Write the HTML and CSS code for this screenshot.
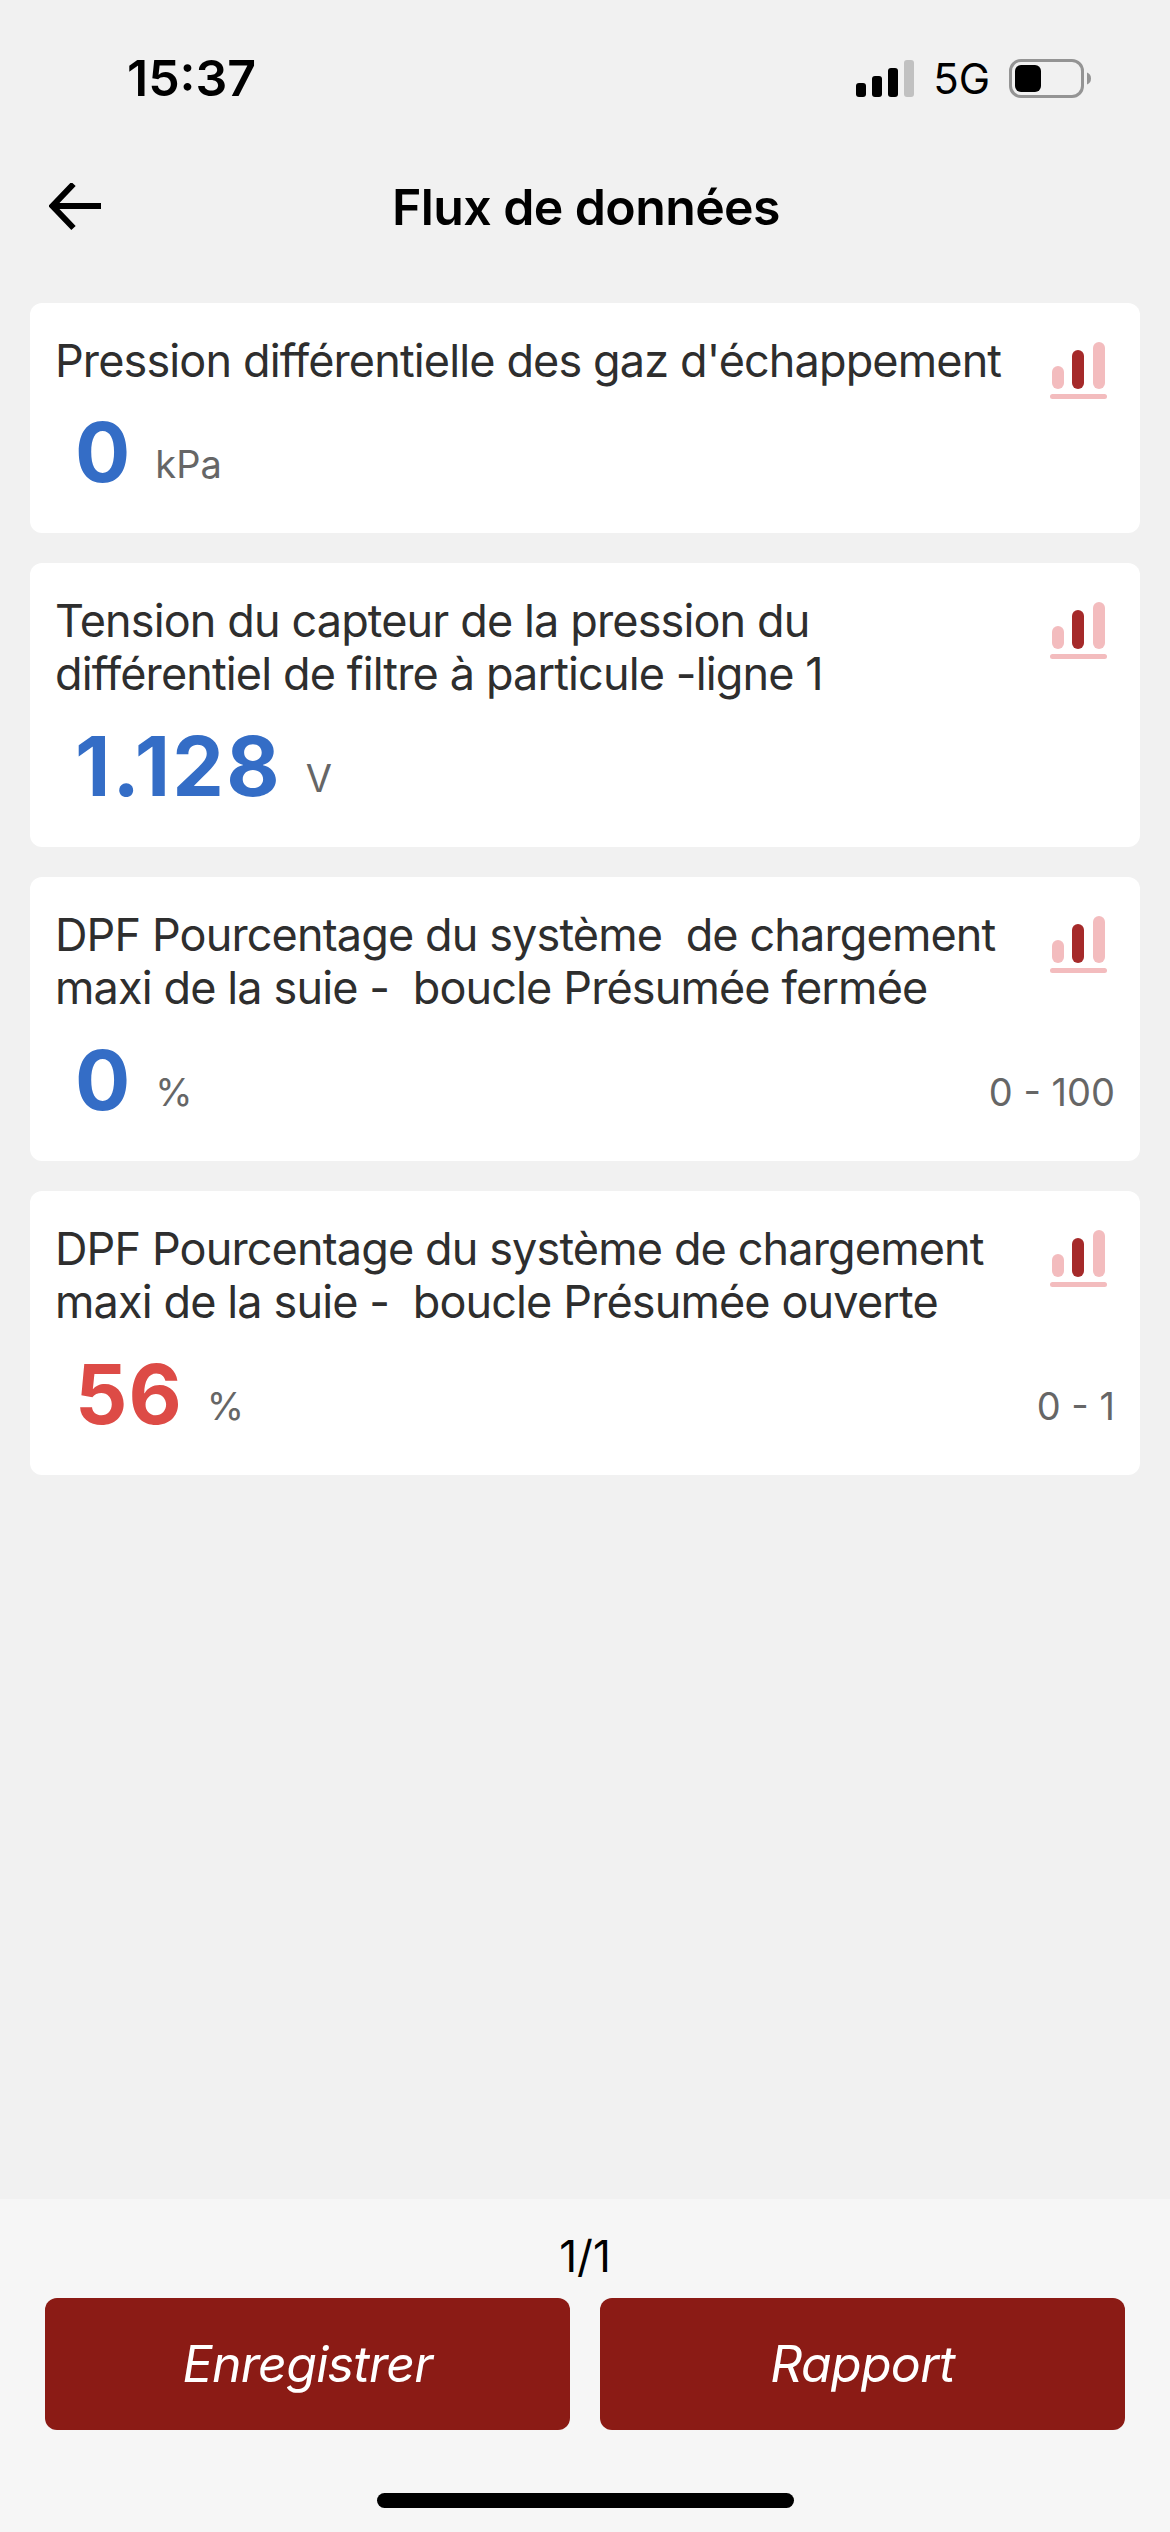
FILE: index.html
```html
<!DOCTYPE html>
<html lang="fr">
<head>
    <meta charset="UTF-8">
    <meta name="viewport" content="width=device-width, initial-scale=1.0">
    <title>Flux de données</title>
    <link rel="stylesheet" href="styles.css">
</head>
<body>
    <div class="status-bar">
        <span class="time">15:37</span>
        <div class="status-icons">
            <svg class="signal" width="58" height="37" viewBox="0 0 58 37">
                <rect x="0" y="23" width="10" height="14" rx="3"/>
                <rect x="16" y="16" width="10" height="21" rx="3"/>
                <rect x="32" y="8" width="10" height="29" rx="3"/>
                <rect x="48" y="0" width="10" height="37" rx="3" fill="#c1c1c1"/>
            </svg>
            <span class="network">5G</span>
            <svg class="battery" width="82" height="39" viewBox="0 0 82 39">
                <rect x="1.5" y="1.5" width="72" height="36" rx="10.5" fill="none" stroke="#949494" stroke-width="3"/>
                <rect x="6" y="6" width="26" height="27" rx="6"/>
                <path d="M78 13.500q4 1.500 4 6t-4 6z" fill="#949494"/>
            </svg>
        </div>
    </div>

    <header class="header">
        <svg class="back" width="52" height="48" viewBox="0 0 52 48">
            <path d="M4 23H52M24.500 1L3.500 23L24.500 45" fill="none" stroke="#000" stroke-width="6"/>
        </svg>
        <h1>Flux de données</h1>
    </header>

    <main class="list">
        <div class="card">
            <div class="card-top">
                <p class="label">Pression différentielle des gaz d'échappement</p>
                <svg class="chart" width="57" height="57" viewBox="0 0 57 57">
                    <rect x="2" y="24" width="12" height="23" rx="6"/>
                    <rect x="22" y="8" width="12" height="39" rx="6" fill="#a52a2a"/>
                    <rect x="43" y="0" width="12" height="47" rx="6"/>
                    <rect x="0" y="52" width="57" height="5" rx="2.500"/>
                </svg>
            </div>
            <div class="reading">
                <span class="value">0</span>
                <span class="unit">kPa</span>
            </div>
        </div>

        <div class="card">
            <div class="card-top">
                <p class="label">Tension du capteur de la pression du
différentiel de filtre à particule -ligne 1</p>
                <svg class="chart" width="57" height="57" viewBox="0 0 57 57">
                    <rect x="2" y="24" width="12" height="23" rx="6"/>
                    <rect x="22" y="8" width="12" height="39" rx="6" fill="#a52a2a"/>
                    <rect x="43" y="0" width="12" height="47" rx="6"/>
                    <rect x="0" y="52" width="57" height="5" rx="2.500"/>
                </svg>
            </div>
            <div class="reading">
                <span class="value decimal">1.128</span>
                <span class="unit">V</span>
            </div>
        </div>

        <div class="card">
            <div class="card-top">
                <p class="label">DPF Pourcentage du système  de chargement
maxi de la suie -  boucle Présumée fermée</p>
                <svg class="chart" width="57" height="57" viewBox="0 0 57 57">
                    <rect x="2" y="24" width="12" height="23" rx="6"/>
                    <rect x="22" y="8" width="12" height="39" rx="6" fill="#a52a2a"/>
                    <rect x="43" y="0" width="12" height="47" rx="6"/>
                    <rect x="0" y="52" width="57" height="5" rx="2.500"/>
                </svg>
            </div>
            <div class="reading">
                <span class="value">0</span>
                <span class="unit">%</span>
                <span class="range">0 - 100</span>
            </div>
        </div>

        <div class="card">
            <div class="card-top">
                <p class="label">DPF Pourcentage du système de chargement
maxi de la suie -  boucle Présumée ouverte</p>
                <svg class="chart" width="57" height="57" viewBox="0 0 57 57">
                    <rect x="2" y="24" width="12" height="23" rx="6"/>
                    <rect x="22" y="8" width="12" height="39" rx="6" fill="#a52a2a"/>
                    <rect x="43" y="0" width="12" height="47" rx="6"/>
                    <rect x="0" y="52" width="57" height="5" rx="2.500"/>
                </svg>
            </div>
            <div class="reading">
                <span class="value alert">56</span>
                <span class="unit">%</span>
                <span class="range">0 - 1</span>
            </div>
        </div>
    </main>

    <footer class="footer">
        <p class="page">1/1</p>
        <div class="buttons">
            <button type="button">Enregistrer</button>
            <button type="button">Rapport</button>
        </div>
        <div class="home-bar"></div>
    </footer>
</body>
</html>
```
FILE: styles.css
```css
* {
    box-sizing: border-box;
}
body {
    margin: 0;
    height: 2532px;
    display: flex;
    flex-direction: column;
    font-family: Inter, "Liberation Sans", sans-serif;
    background-color: #f1f1f1;
    color: #000;
}
.status-bar {
    height: 156px;
    padding: 0 79px 0 127px;
    display: flex;
    justify-content: space-between;
    align-items: center;
}
.time {
    font-size: 50px;
    font-weight: 600;
}
.status-icons {
    display: flex;
    align-items: center;
}
.network {
    margin: 0 19px;
    font-size: 42px;
}
.header {
    height: 102px;
    padding-left: 49px;
    display: grid;
    grid-template-columns: 52px 1fr 99px;
    align-items: center;
}
.header h1 {
    margin: 0;
    font-size: 50px;
    font-weight: 600;
    letter-spacing: -0.6px;
    text-align: center;
}
.list {
    flex: 1;
    padding: 45px 30px 0;
    display: flex;
    flex-direction: column;
    gap: 30px;
}
.card {
    display: flex;
    flex-direction: column;
    justify-content: space-between;
    height: 284px;
    padding: 31px 25px;
    background-color: #fff;
    border-radius: 12px;
}
.card:first-child {
    height: 230px;
}
.card-top {
    display: flex;
    justify-content: space-between;
    align-items: flex-start;
    height: 65px;
}
.label {
    margin: 0;
    font-size: 45px;
    line-height: 53px;
    letter-spacing: -0.87px;
    color: #2e2e2e;
    white-space: pre;
}
.chart {
    margin: 8px 8px 0 0;
    fill: #f3bcbe;
}
.reading {
    display: flex;
    align-items: flex-end;
    padding-left: 20px;
}
.value {
    font-size: 82px;
    font-weight: 700;
    line-height: 99px;
    letter-spacing: 1px;
    color: #346dc6;
}
.decimal {
    letter-spacing: 2.2px;
}
.alert {
    color: #dd4b46;
}
.unit, .range {
    margin-bottom: 15px;
    font-size: 38px;
    line-height: 46px;
    color: #666;
}
.unit {
    margin-left: 24px;
}
.range {
    margin-left: auto;
}
.footer {
    height: 333px;
    padding: 30px 45px 0;
    background-color: #f6f6f6;
}
.page {
    margin: 0;
    font-size: 44px;
    line-height: 54px;
    text-align: center;
}
.buttons {
    display: flex;
    gap: 30px;
    margin-top: 15px;
}
button {
    flex: 1;
    height: 132px;
    border: none;
    border-radius: 12px;
    background-color: #8b1b15;
    color: #fff;
    font-family: inherit;
    font-size: 50px;
    font-style: italic;
    letter-spacing: -0.7px;
}
.home-bar {
    width: 417px;
    height: 15px;
    margin: 63px auto 0;
    border-radius: 8px;
    background-color: #000;
}
```
